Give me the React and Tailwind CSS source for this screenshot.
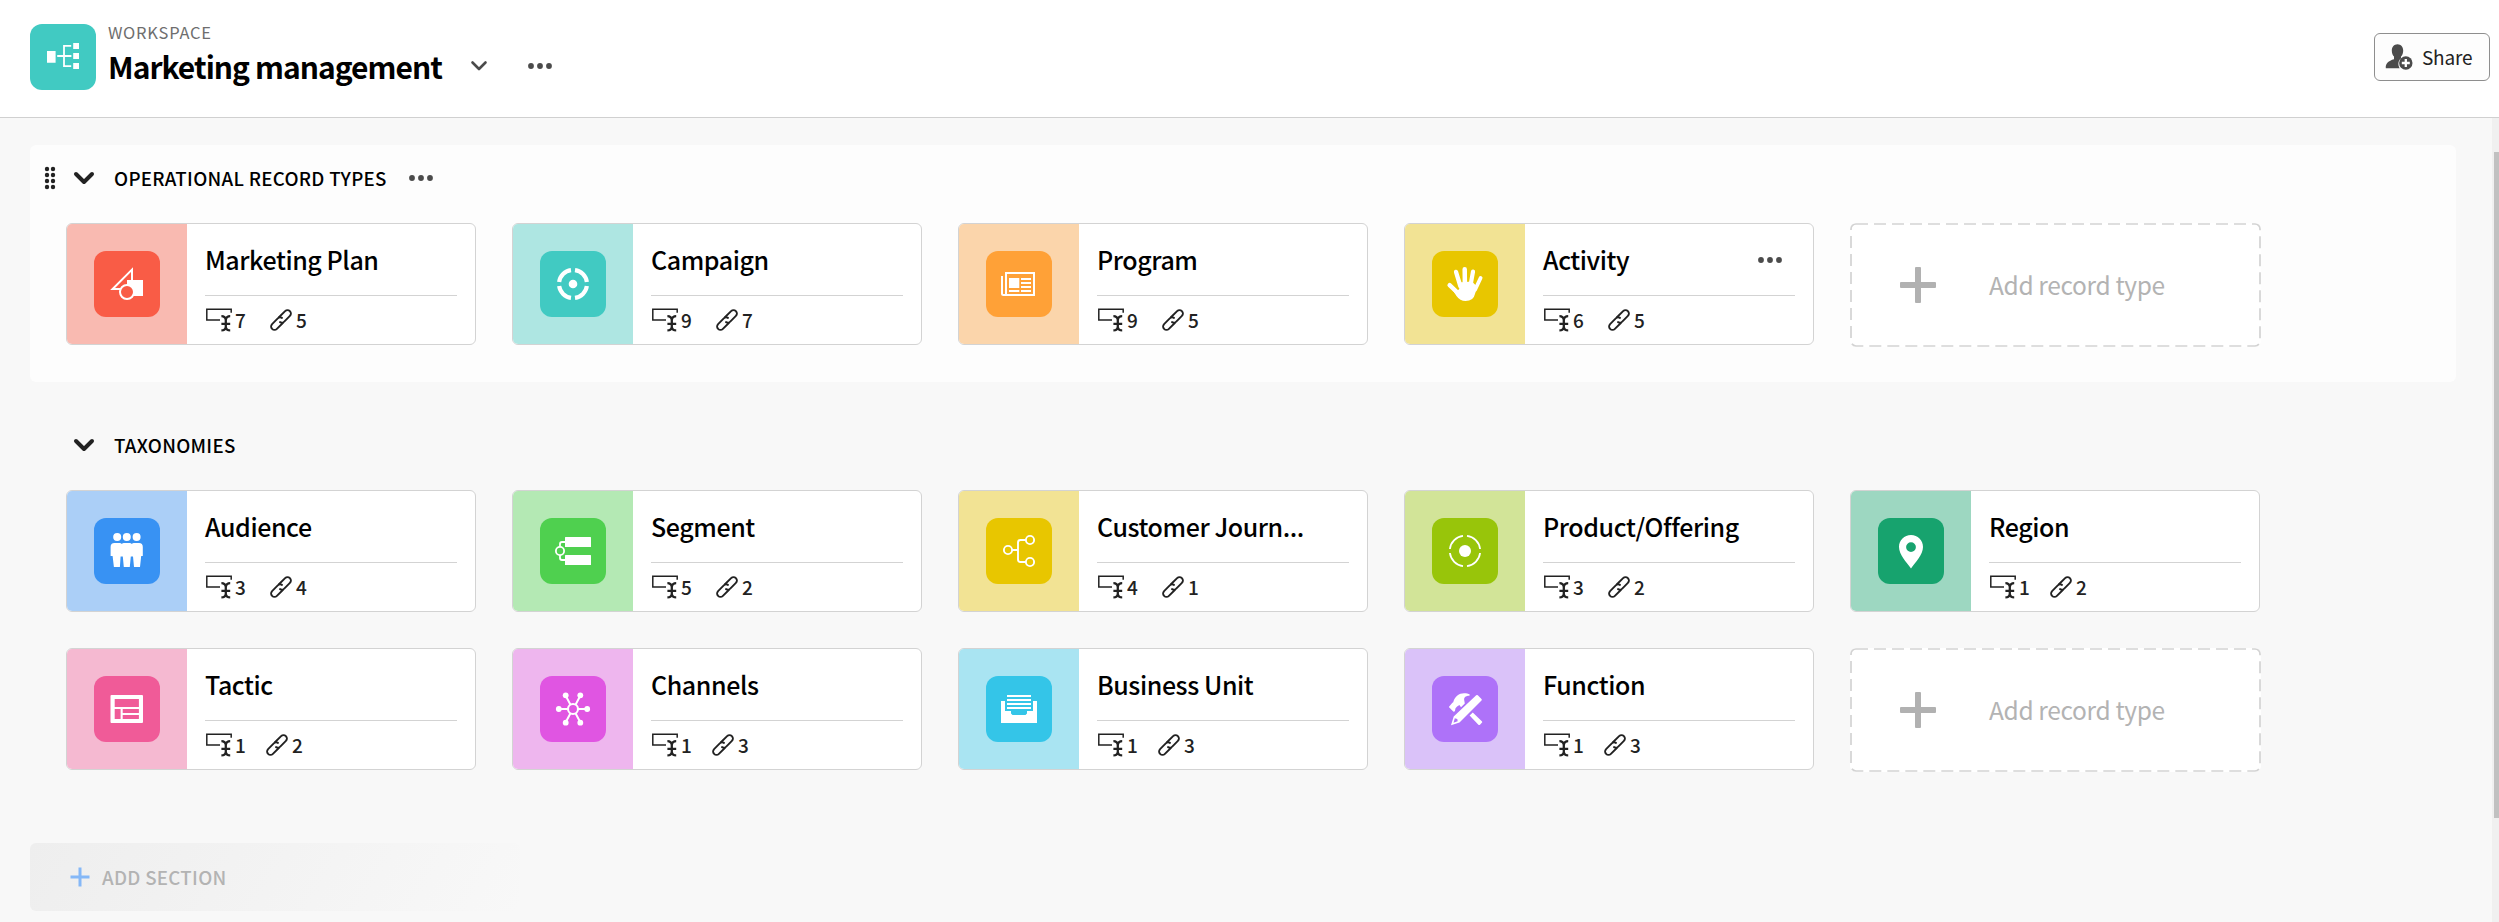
import React from "react";

const W = "#fff";

const glyphs = {
  workspace: (
    <g>
      <path d="M17 27h8.6v11.7H17zM43.2 19h5.8v6h-5.8zM43.2 29h5.8v6h-5.8zM43.2 39h5.8v6h-5.8z" fill={W} />
      <path d="M27.2 32h14.2M41.2 21.8H34v20.4h7.2" fill="none" stroke={W} strokeWidth="1.8" />
    </g>
  ),
  shapes: (
    <g>
      <path d="M38 18.6V38H18.6z" fill="none" stroke={W} strokeWidth="2" />
      <path d="M33 29h16v16H33z" fill={W} />
      <circle cx="33" cy="41" r="7" fill="#f95c46" stroke={W} strokeWidth="2" />
    </g>
  ),
  target: (
    <g fill="none" stroke={W} strokeWidth="4.2">
      <path d="M35 19.15A14 14 0 0 1 46.85 31M46.85 35A14 14 0 0 1 35 46.85M31 46.85A14 14 0 0 1 19.15 35M19.15 31A14 14 0 0 1 31 19.15" />
      <circle cx="33" cy="33" r="4.3" fill={W} stroke="none" />
    </g>
  ),
  news: (
    <g>
      <path d="M20 22h28v22H20zM16 25v17.5q0 1.5 1.5 1.5H20" fill="none" stroke={W} strokeWidth="2" />
      <path d="M23 27h10.3v10H23zM23 39h10.3v2H23zM35 27h10v2H35zM35 31h10v2H35zM35 35h10v2H35zM35 39h10v2H35z" fill={W} />
    </g>
  ),
  hand: (
    <g stroke={W} strokeLinecap="round" fill="none">
      <path d="M17.6 34.2L27 43" strokeWidth="4.4" />
      <path d="M24 20.9L28.3 35" strokeWidth="4.3" />
      <path d="M32.7 18.3L32.9 34" strokeWidth="4.5" />
      <path d="M41 20.6L38.6 34" strokeWidth="4.2" />
      <path d="M48.6 27L43.2 38.5" strokeWidth="3.8" />
      <path d="M26.5 31.5L40 30.5 45.3 36 42.8 43.5Q41.5 50 33.5 50 28 50 24.5 45L19.5 37.5 25 39.5Q27.5 39 27.5 36z" fill={W} stroke="none" />
    </g>
  ),
  people: (
    <g fill={W}>
      <ellipse cx="23.2" cy="19" rx="4" ry="4.1" />
      <ellipse cx="32.8" cy="19" rx="4" ry="4.1" />
      <ellipse cx="42.6" cy="19" rx="4" ry="4.1" />
      <path d="M20.5 25h5.3q1.2 0 2 1 .8-1 2-1h6q1.2 0 2 1 .8-1 2-1H45q3.8 0 3.8 4v9h-1.6L46 49h-6l-1-10.5h-2.2L35.8 49h-6l-1-10.5h-2.2L25.9 49h-6l-1.3-11h-2v-9q0-4 3.9-4z" />
    </g>
  ),
  segment: (
    <g>
      <rect x="25" y="19" width="26" height="10" rx="0.6" fill={W} />
      <rect x="25" y="37" width="26" height="10" rx="0.6" fill={W} />
      <circle cx="20" cy="33" r="4.1" fill="none" stroke={W} strokeWidth="1.8" />
      <path d="M20 29v-3q0-2 2-2h3M20 37v3q0 2 2 2h3" fill="none" stroke={W} strokeWidth="1.8" />
    </g>
  ),
  journey: (
    <g fill="none" stroke={W} strokeWidth="1.9">
      <circle cx="22" cy="32" r="4.1" />
      <circle cx="44" cy="22" r="4.1" />
      <circle cx="44" cy="44" r="4.1" />
      <path d="M26 32h6M40 22h-5.5q-2.5 0-2.5 2.5v17q0 2.5 2.5 2.5H40" />
    </g>
  ),
  product: (
    <g fill="none" stroke={W} strokeWidth="1.8">
      <path d="M35 17.9A15.2 15.2 0 0 1 48.1 31M48.1 35A15.2 15.2 0 0 1 35 48.1M31 48.1A15.2 15.2 0 0 1 17.9 35M17.9 31A15.2 15.2 0 0 1 31 17.9" />
      <circle cx="33" cy="33" r="6" fill={W} stroke="none" />
    </g>
  ),
  pin: (
    <path
      fillRule="evenodd"
      fill={W}
      d="M33 17c6.7 0 12 5.3 12 12 0 7.5-7.5 15.5-12 21.4C28.5 44.5 21 36.5 21 29c0-6.7 5.3-12 12-12zm0 7.2a4.9 4.9 0 1 0 0 9.8 4.9 4.9 0 0 0 0-9.8z"
    />
  ),
  layout: (
    <path
      fillRule="evenodd"
      fill={W}
      d="M17.5 19h30.5q1 0 1 1v26q0 1-1 1h-30.5q-1 0-1-1v-26q0-1 1-1zM20.7 23v8h24.2v-8zM20.7 33v10h5.9v-10zM28.7 33v4h16.2v-4zM28.7 39v4h16.2v-4z"
    />
  ),
  hub: (
    <g stroke={W} strokeWidth="2" fill="none">
      <circle cx="33" cy="33" r="5" strokeWidth="2.1" />
      <path d="M38 33h9M28 33h-9M35.5 28.7l4.8-9M30.5 28.7l-4.8-9M35.5 37.3l4.8 9M30.5 37.3l-4.8 9" />
      <g fill={W} stroke="none">
        <circle cx="47.2" cy="33" r="2.9" />
        <circle cx="18.8" cy="33" r="2.9" />
        <circle cx="40.3" cy="19.3" r="2.9" />
        <circle cx="25.7" cy="19.3" r="2.9" />
        <circle cx="40.3" cy="46.7" r="2.9" />
        <circle cx="25.7" cy="46.7" r="2.9" />
      </g>
    </g>
  ),
  tray: (
    <path
      fill={W}
      d="M21 19h24v2H21zM21 23h24v2H21zM21 27h24v2H21zM21 31h24v2H21zM15 25h4v10h6v2.5l1.5 1.5h13l1.5-1.5v-2.5h6v-10h4v22H15z"
    />
  ),
  tools: (
    <g fill={W}>
      <path d="M16.8 31l3.6-4.2.8-.6C23 20 27 17.2 32 17.2c2.4 0 4.4.4 5.8 1.3l-.4 1.2c-3.6 0-5.6 1.6-5.2 4.2l.6 3.6-3.8 3.8-1.6-2.2-2.3 1.3-1.6 1.8-.6 3-1.4.6z" />
      <path d="M37.6 39.6l3.2-3.2 9 8.8c.6.6.6 1 0 1.6l-1.8 1.9c-.6.5-1 .5-1.6 0z" />
      <path
        fillRule="evenodd"
        d="M44.2 19.3q.8-.7 1.6 0l3.7 3.7q.7.8 0 1.6L27.5 46.4 19 49.2l2.7-8.6zM22.8 42.2l-1.3 4.5 4.2-1.5-.4-2.2z"
      />
    </g>
  ),
};

function Tile({ glyph, color }) {
  return (
    <div className={`h-[66px] w-[66px] shrink-0 overflow-hidden rounded-[12px] ${color}`}>
      <svg viewBox="0 0 66 66" width="66" height="66" className="block">
        {glyphs[glyph]}
      </svg>
    </div>
  );
}

function Dots() {
  return (
    <svg width="24" height="6" viewBox="0 0 24 6" className="block shrink-0" fill="#4b4b4b">
      <circle cx="3" cy="3" r="2.9" />
      <circle cx="12" cy="3" r="2.9" />
      <circle cx="21" cy="3" r="2.9" />
    </svg>
  );
}

function FieldIcon() {
  return (
    <svg width="26" height="24" viewBox="0 0 26 24" className="block shrink-0" fill="none" stroke="#222">
      <path d="M14 12H.8V1.2h24.4v3.6" strokeWidth="1.5" />
      <path
        d="M15.4 8.2q3.9 0 4.4 3.6.5-3.600 4.400-3.600M19.800 11v10M15.400 22.400q3.900 0 4.400-3.600.5 3.600 4.400 3.600M15.400 15.800h8.800"
        strokeWidth="2.300"
      />
    </svg>
  );
}

function LinkIcon() {
  const half = "M.8-3.400H9.200A3.400 3.400 0 0 1 9.200 3.400H1.200A3.400 3.400 0 0 1-2.200.8";
  return (
    <svg
      width="22"
      height="22"
      viewBox="-11 -11 22 22"
      className="block shrink-0"
      fill="none"
      stroke="#222"
      strokeWidth="1.900"
      strokeLinecap="round"
    >
      <path d={half} transform="rotate(-45)" />
      <path d={half} transform="rotate(135)" />
    </svg>
  );
}

function Card({ name, glyph, tile, side, fields, links, menu }) {
  return (
    <div className="flex h-[122px] w-[410px] overflow-hidden rounded-[6px] border border-[#d3d3d3] bg-white">
      <div className={`flex w-[120px] shrink-0 items-center justify-center ${side}`}>
        <Tile glyph={glyph} color={tile} />
      </div>
      <div className="flex flex-1 flex-col px-[18px]">
        <div className="flex h-[72px] items-start justify-between border-b border-[#d3d3d3] pt-[20px] pr-[13px]">
          <span className="text-[25px] leading-[30px] font-medium tracking-[-0.42px] whitespace-nowrap text-black">{name}</span>
          {menu && (
            <div className="pt-[13px]">
              <Dots />
            </div>
          )}
        </div>
        <div className="flex flex-1 items-center pl-px text-[19px] leading-[24px] font-medium text-[#222]">
          <FieldIcon />
          <span className={`pl-[3px] ${fields === 1 ? "w-[34px]" : "w-[38px]"}`}>{fields}</span>
          <LinkIcon />
          <span className="pl-[4px]">{links}</span>
        </div>
      </div>
    </div>
  );
}

function AddCard() {
  return (
    <div className="relative flex h-[124px] w-[411px] items-center rounded-[6px] bg-white pl-[50px]">
      <svg className="absolute inset-0" width="411" height="124" viewBox="0 0 411 124">
        <rect x="1" y="1" width="409" height="122" rx="5" fill="none" stroke="#d3d3d3" strokeWidth="1.700" strokeDasharray="12 6" />
      </svg>
      <svg width="36" height="36" viewBox="0 0 36 36" fill="#b1b1b1">
        <rect x="15" width="6" height="36" rx="1" />
        <rect y="15" width="36" height="6" rx="1" />
      </svg>
      <span className="ml-[53px] text-[24.5px] leading-[30px] tracking-[-0.35px] text-[#b3b3b3]">Add record type</span>
    </div>
  );
}

function SectionHead({ title, hover }) {
  return (
    <div className="flex h-[66px] items-center pl-[14px]">
      <svg width="12" height="24" viewBox="0 0 12 24" fill="#222" className={hover ? "" : "invisible"}>
        {[3, 9, 15, 21].map((y) => (
          <g key={y}>
            <circle cx="3" cy={y} r="2.2" />
            <circle cx="9" cy={y} r="2.2" />
          </g>
        ))}
      </svg>
      <svg width="22" height="14" viewBox="0 0 22 14" className="ml-[17px]" fill="none" stroke="#222" strokeWidth="4" strokeLinecap="round" strokeLinejoin="round">
        <path d="M3 3l8 8 8-8" />
      </svg>
      <span className="mr-[22px] ml-[19px] text-[18.7px] leading-[24px] font-medium tracking-[0.29px] text-black">{title}</span>
      {hover && <Dots />}
    </div>
  );
}

const operational = [
  { name: "Marketing Plan", glyph: "shapes", tile: "bg-[#f95c46]", side: "bg-[#f9bab1]", fields: 7, links: 5 },
  { name: "Campaign", glyph: "target", tile: "bg-[#41cac2]", side: "bg-[#aee6e2]", fields: 9, links: 7 },
  { name: "Program", glyph: "news", tile: "bg-[#ffa137]", side: "bg-[#fbd5ab]", fields: 9, links: 5 },
  { name: "Activity", glyph: "hand", tile: "bg-[#e8c600]", side: "bg-[#f2e394]", fields: 6, links: 5, menu: true },
];

const taxonomies = [
  { name: "Audience", glyph: "people", tile: "bg-[#3892f3]", side: "bg-[#abcff7]", fields: 3, links: 4 },
  { name: "Segment", glyph: "segment", tile: "bg-[#4fd04f]", side: "bg-[#b4e9b4]", fields: 5, links: 2 },
  { name: "Customer Journ...", glyph: "journey", tile: "bg-[#e8c600]", side: "bg-[#f2e394]", fields: 4, links: 1 },
  { name: "Product/Offering", glyph: "product", tile: "bg-[#98c50a]", side: "bg-[#d2e498]", fields: 3, links: 2 },
  { name: "Region", glyph: "pin", tile: "bg-[#17a36e]", side: "bg-[#9dd7c1]", fields: 1, links: 2 },
  { name: "Tactic", glyph: "layout", tile: "bg-[#f05b98]", side: "bg-[#f5b9d1]", fields: 1, links: 2 },
  { name: "Channels", glyph: "hub", tile: "bg-[#e055e2]", side: "bg-[#eeb6ee]", fields: 1, links: 3 },
  { name: "Business Unit", glyph: "tray", tile: "bg-[#34c5e8]", side: "bg-[#a9e4f2]", fields: 1, links: 3 },
  { name: "Function", glyph: "tools", tile: "bg-[#ae72f9]", side: "bg-[#dac2f9]", fields: 1, links: 3 },
];

function Section({ title, cards, hover }) {
  return (
    <section className={`w-[2426px] rounded-[6px] ${hover ? "bg-[#fdfdfd]" : ""}`}>
      <SectionHead title={title} hover={hover} />
      <div className="grid grid-cols-[repeat(5,410px)] gap-[36px] pt-[12px] pb-[37px] pl-[36px]">
        {cards.map((c) => (
          <Card key={c.name} {...c} />
        ))}
        <div className="h-[122px]">
          <AddCard />
        </div>
      </div>
    </section>
  );
}

export default function App() {
  return (
    <div className="flex h-[922px] w-[2499px] flex-col overflow-hidden bg-[#f8f8f8] font-['Noto_Sans_CJK_SC',sans-serif]">
      <header className="flex h-[118px] shrink-0 items-start border-b border-[#d0d0d0] bg-white pl-[30px]">
        <div className="pt-[24px]">
          <Tile glyph="workspace" color="bg-[#41cac2]" />
        </div>
        <div className="pt-[21px] pl-[12px]">
          <div className="text-[16.5px] leading-[22px] tracking-[0.75px] text-[#6e6e6e]">WORKSPACE</div>
          <div className="flex items-center">
            <h1 className="text-[30px] leading-[46px] font-bold tracking-[-0.95px] whitespace-nowrap text-black">Marketing management</h1>
            <svg width="18" height="12" viewBox="0 0 18 12" className="ml-[28px]" fill="none" stroke="#4b4b4b" strokeWidth="2.6" strokeLinecap="round" strokeLinejoin="round">
              <path d="M2.5 2.5L9 9l6.5-6.500" />
            </svg>
            <div className="ml-[40px]">
              <Dots />
            </div>
          </div>
        </div>
        <button className="mt-[33px] mr-[9px] ml-auto flex h-[48px] w-[116px] items-center rounded-[6px] border border-[#8e8e8e] bg-[#fdfdfd] pl-[10px]">
          <svg width="28" height="28" viewBox="0 0 28 28" fill="#4b4b4b">
            <path d="M12.5 1.2c3.4 0 5.7 2.8 5.7 6.3 0 2.6-.8 4.7-2.2 6.1v1.6c-1.8 1.5-2.6 3.5-2.6 5.6 0 1.7.4 3.1 1.3 4.4H.8c-.5-4.6 2.8-7.4 8.2-8.9v-2.7c-1.4-1.4-2.2-3.5-2.2-6.1 0-3.5 2.3-6.3 5.7-6.3z" />
            <circle cx="20.8" cy="20" r="6.7" />
            <path d="M20.8 16v8M16.8 20h8" stroke="#fff" strokeWidth="2.3" />
          </svg>
          <span className="ml-[9px] text-[19px] leading-[24px] tracking-[-0.2px] text-[#222]">Share</span>
        </button>
      </header>
      <div className="flex min-h-0 flex-1">
        <main className="flex flex-1 flex-col pt-[27px] pl-[30px]">
          <Section title="OPERATIONAL RECORD TYPES" cards={operational} hover />
          <div className="h-[30px] shrink-0" />
          <Section title="TAXONOMIES" cards={taxonomies} />
          <div className="mt-[36px] flex h-[68px] w-[490px] shrink-0 items-center rounded-[6px] bg-[linear-gradient(120deg,#eeeeee,#f8f8f8)] pl-[40px]">
            <svg width="20" height="20" viewBox="0 0 20 20" stroke="#85b8f7" strokeWidth="3">
              <path d="M10 .5v19M.5 10h19" />
            </svg>
            <span className="ml-[12px] text-[18.7px] leading-[24px] font-medium tracking-[0.3px] text-[#b3b3b3]">ADD SECTION</span>
          </div>
        </main>
        <div className="w-[7px] bg-[#f0f0f0] pt-[34px] pl-[2px]">
          <div className="h-[666px] w-[5px] bg-[#c1c1c1]" />
        </div>
      </div>
    </div>
  );
}
